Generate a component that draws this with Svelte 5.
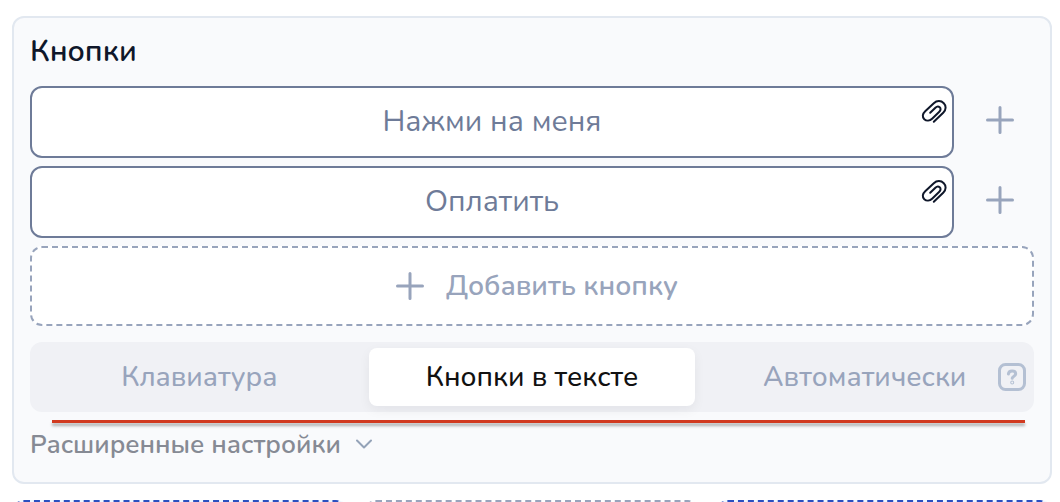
<script lang="ts">
	let buttons = $state(['Нажми на меня', 'Оплатить']);
	const modes = ['Клавиатура', 'Кнопки в тексте', 'Автоматически'];
	let mode = $state(1);
	let expanded = $state(false);

	function addButton() {
		buttons.push('Кнопка');
	}
</script>

{#snippet plus()}
	<svg class="plus" viewBox="0 0 28 28" width="28" height="28" aria-hidden="true">
		<path d="M14 1.5v25M1.5 14h25" />
	</svg>
{/snippet}

<div class="page">
	<section class="panel">
		<h2 class="title">Кнопки</h2>

		<div class="rows">
			{#each buttons as label}
				<div class="row">
					<button class="item" type="button">
						{label}
						<svg class="clip" viewBox="0 0 26 26" width="26" height="26" aria-hidden="true">
							<path
								d="M12.8 22.800 L22.200 13.700 C25.400 10.600 25.200 6.600 22.800 4.200 C20.100 1.500 15.900 1.300 12.800 4.200 L4.200 12.200 C1.300 14.900 1.100 18 3.300 20.200 C5.500 22.300 8.700 22 11.100 19.700 L18.300 12.700 C19.900 11.100 19.900 9.400 18.700 8.300 C17.500 7.200 15.800 7.300 14.400 8.700 L9.200 13.800"
							/>
						</svg>
					</button>
					<button class="add-side" type="button" aria-label="Добавить в ряд" onclick={addButton}>
						{@render plus()}
					</button>
				</div>
			{/each}
			<button class="add" type="button" onclick={addButton}>
				{@render plus()}
				Добавить кнопку
			</button>
		</div>

		<div class="modes">
			{#each modes as name, i}
				<button class="mode" class:active={mode === i} type="button" onclick={() => (mode = i)}>
					{name}
				</button>
			{/each}
			<button class="help" type="button" aria-label="Справка">
				<svg viewBox="0 0 28 28" width="28" height="28" aria-hidden="true">
					<rect x="1.500" y="1.500" width="25" height="25" rx="6" />
					<path d="M10.400 11c0.200-1.900 1.600-2.900 3.700-2.900s3.600 1.100 3.600 2.900c0 2.200-3.200 2.100-3.500 4.200" />
					<circle cx="14.200" cy="19.500" r="0.500" />
				</svg>
			</button>
			<div class="underline"></div>
		</div>

		<button class="advanced" type="button" aria-expanded={expanded} onclick={() => (expanded = !expanded)}>
			Расширенные настройки
			<svg viewBox="0 0 16 10" width="16" height="10" aria-hidden="true">
				<path d="M1 1.500l7 7 7-7" />
			</svg>
		</button>
	</section>

	<div class="cards">
		<div class="card blue"></div>
		<div class="card"></div>
		<div class="card blue"></div>
	</div>
</div>

<style>
	:global(body) {
		background: #fff;
	}

	.page {
		box-sizing: border-box;
		height: 100vh;
		overflow: hidden;
		padding: 16px 8px 0 12px;
		font-family: Nunito, 'Noto Sans', 'Open Sans', sans-serif;
	}

	button {
		box-sizing: border-box;
		margin: 0;
		padding: 0;
		border: 0;
		background: none;
		font: inherit;
		cursor: pointer;
	}

	svg {
		display: block;
		flex: none;
		fill: none;
		stroke: currentColor;
		stroke-linecap: round;
		stroke-linejoin: round;
	}

	.panel {
		padding: 18px 16px;
		border: 2px solid #e2e8f0;
		border-radius: 12px;
		background: #f9fafc;
	}

	.title {
		margin: 0 0 18px;
		font-size: 30px;
		font-weight: 600;
		line-height: 32px;
		color: #0f172a;
	}

	.rows {
		display: flex;
		flex-direction: column;
		gap: 8px;
	}

	.row {
		display: flex;
		gap: 12px;
	}

	.item {
		position: relative;
		flex: 1;
		height: 72px;
		padding-bottom: 2px;
		border: 2px solid #6e7b98;
		border-radius: 12px;
		background: #fff;
		font-size: 30px;
		color: #6e7b98;
	}

	.clip {
		position: absolute;
		top: 11px;
		right: 5px;
		color: #0f172a;
		stroke-width: 2;
	}

	.add-side {
		display: flex;
		align-items: center;
		justify-content: center;
		width: 68px;
		padding-bottom: 4px;
		color: #98a4bc;
	}

	.plus {
		stroke-width: 3;
	}

	.add {
		display: flex;
		align-items: center;
		justify-content: center;
		gap: 22px;
		height: 80px;
		padding-left: 10px;
		border: 2px dashed #98a4bc;
		border-radius: 12px;
		background: #fff;
		font-size: 28px;
		font-weight: 600;
		color: #98a4bc;
	}

	.modes {
		position: relative;
		display: grid;
		grid-template-columns: repeat(3, 1fr);
		gap: 6px;
		margin-top: 16px;
		padding: 6px;
		border-radius: 12px;
		background: #f0f1f5;
	}

	.mode {
		height: 58px;
		border-radius: 8px;
		font-size: 28px;
		font-weight: 500;
		color: #98a4bc;
	}

	.mode.active {
		background: #fff;
		box-shadow: 0 4px 12px rgba(15, 23, 42, 0.06);
		color: #111;
	}

	.help {
		position: absolute;
		top: 21px;
		right: 8px;
		color: #b4c0d3;
	}

	.help svg {
		stroke-width: 3;
	}

	/* accent rule hanging under the mode switch */
	.underline {
		position: absolute;
		top: 78px;
		right: 9px;
		left: 22px;
		height: 3px;
		background: #d13a20;
		box-shadow: 0 3px 3px rgba(0, 0, 0, 0.3);
	}

	.advanced {
		display: flex;
		align-items: center;
		gap: 15px;
		height: 40px;
		margin-top: 12px;
		font-size: 26px;
		font-weight: 600;
		color: #868a94;
	}

	.advanced svg {
		color: #94a3b8;
		stroke-width: 2;
	}

	.cards {
		display: grid;
		grid-template-columns: repeat(3, 1fr);
		gap: 16px;
		margin-top: 16px;
	}

	.card {
		height: 72px;
		border: 2px dashed #98a4bc;
		border-radius: 12px;
	}

	.card.blue {
		border-color: #2b4fc0;
		background: #eff6ff;
	}
</style>
